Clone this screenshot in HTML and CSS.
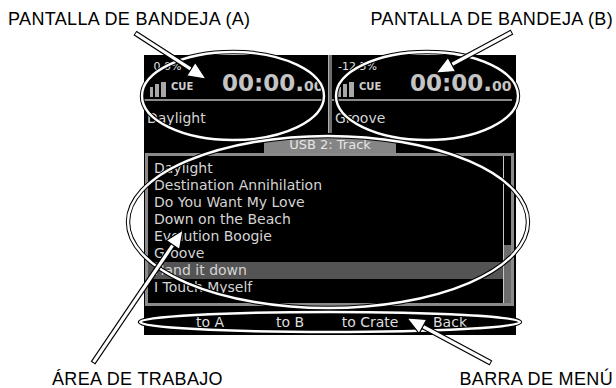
FILE: index.html
```html
<!DOCTYPE html>
<html lang="es">
<head>
<meta charset="utf-8">
<title>Pantalla</title>
<link rel="stylesheet" href="styles.css">
</head>
<body>
<div class="page">
  <header class="labels labels-top">
    <span>PANTALLA DE BANDEJA (A)</span>
    <span>PANTALLA DE BANDEJA (B)</span>
  </header>

  <main class="screen">
    <section class="decks">
      <div class="deck">
        <div class="pitch">&nbsp;0.0%</div>
        <div class="timerow">
          <svg class="bars" viewBox="0 0 16 15"><rect x="0" y="5" width="3" height="10"/><rect x="5" y="2" width="4" height="13"/><rect x="11" y="0" width="5" height="15"/></svg>
          <span class="cue">CUE</span>
          <span class="time">00:00.<small>00</small></span>
        </div>
        <div class="sep"></div>
        <div class="title">Daylight</div>
      </div>
      <div class="divider"></div>
      <div class="deck">
        <div class="pitch">-12.5%</div>
        <div class="timerow">
          <svg class="bars" viewBox="0 0 16 15"><rect x="0" y="5" width="3" height="10"/><rect x="5" y="2" width="4" height="13"/><rect x="11" y="0" width="5" height="15"/></svg>
          <span class="cue">CUE</span>
          <span class="time">00:00.<small>00</small></span>
        </div>
        <div class="sep"></div>
        <div class="title">Groove</div>
      </div>
    </section>

    <div class="tab">USB 2: Track</div>

    <section class="list">
      <ul class="tracks">
        <li>Daylight</li>
        <li>Destination Annihilation</li>
        <li>Do You Want My Love</li>
        <li>Down on the Beach</li>
        <li>Evolution Boogie</li>
        <li>Groove</li>
        <li class="sel">Hand it down</li>
        <li>I Touch Myself</li>
      </ul>
      <div class="scrollbar"><div class="thumb"></div></div>
    </section>

    <nav class="menu">
      <span>to A</span>
      <span>to B</span>
      <span>to Crate</span>
      <span>Back</span>
    </nav>
  </main>

  <footer class="labels labels-bottom">
    <span>ÁREA DE TRABAJO</span>
    <span>BARRA DE MENÚ</span>
  </footer>

  <svg class="overlay" viewBox="0 0 616 388" width="616" height="388">
    <defs>
      <marker id="head" markerUnits="userSpaceOnUse" viewBox="0 0 20 18" markerWidth="20" markerHeight="18" refX="1" refY="9" orient="auto">
        <path d="M1,1 L19,9 L1,17 Z" fill="#fff" stroke="#000" stroke-width="1.2"/>
      </marker>
    </defs>
    <g fill="none" stroke="#000" stroke-width="4.4">
      <ellipse cx="233" cy="96" rx="91" ry="44"/>
      <ellipse cx="427" cy="96" rx="91" ry="44"/>
      <ellipse cx="328" cy="222" rx="200" ry="86"/>
      <ellipse cx="330" cy="322" rx="190" ry="10"/>
    </g>
    <g fill="none" stroke="#fff" stroke-width="2.4">
      <ellipse cx="233" cy="96" rx="91" ry="44"/>
      <ellipse cx="427" cy="96" rx="91" ry="44"/>
      <ellipse cx="328" cy="222" rx="200" ry="86"/>
      <ellipse cx="330" cy="322" rx="190" ry="10"/>
    </g>
    <g stroke="#000" stroke-width="5.6">
      <line x1="135" y1="33" x2="190.9" y2="69.2"/>
      <line x1="512" y1="32" x2="451.8" y2="64.5"/>
      <line x1="93" y1="363" x2="172.9" y2="244.9"/>
      <line x1="491" y1="363" x2="422.9" y2="326.5"/>
    </g>
    <g stroke="#fff" stroke-width="3.2">
      <line x1="135.8" y1="33.5" x2="190.9" y2="69.2" marker-end="url(#head)"/>
      <line x1="511.1" y1="32.5" x2="451.8" y2="64.5" marker-end="url(#head)"/>
      <line x1="93.6" y1="362.2" x2="172.9" y2="244.9" marker-end="url(#head)"/>
      <line x1="490.1" y1="362.5" x2="422.9" y2="326.5" marker-end="url(#head)"/>
    </g>
  </svg>
</div>
</body>
</html>
```

FILE: styles.css
```css
* { box-sizing: border-box; }

body {
  margin: 0;
  background: #fff;
}

.page {
  position: relative;
  width: 616px;
  height: 388px;
  overflow: hidden;
  font-family: "Liberation Sans", Arial, sans-serif;
  color: #000;
}

.labels {
  display: flex;
  justify-content: space-between;
  font-size: 18px;
  line-height: 20px;
  letter-spacing: 0.35px;
  white-space: nowrap;
}

.labels-top {
  height: 55px;
  padding: 9px 3px 0 8px;
}

.labels-bottom {
  margin-top: 38px;
  padding: 0 3px 0 52px;
  line-height: 13px;
}

.screen {
  margin-left: 144px;
  width: 372px;
  height: 280px;
  background: #000;
  font-family: "DejaVu Sans", "Liberation Sans", sans-serif;
  color: #d4d4d4;
  display: flex;
  flex-direction: column;
}

.decks {
  display: flex;
  height: 78px;
  flex-shrink: 0;
}

.deck {
  flex: 1;
  min-width: 0;
  overflow: hidden;
  padding-top: 5px;
}

.pitch {
  height: 13px;
  font-size: 11px;
  line-height: 13px;
  padding-left: 6px;
  color: #e2e2e2;
  white-space: pre;
}

.timerow {
  display: flex;
  align-items: flex-end;
  height: 25px;
  padding-left: 6px;
}

.bars {
  width: 16px;
  height: 15px;
  flex-shrink: 0;
  margin: 0 5px 1px 0;
  fill: #a8a8a8;
}

.cue {
  width: 51px;
  flex-shrink: 0;
  font-size: 10px;
  font-weight: bold;
  line-height: 10px;
  margin-bottom: 6px;
  color: #cdcdcd;
}

.time {
  flex-shrink: 0;
  font-size: 23px;
  font-weight: bold;
  line-height: 23px;
  color: #c4c4c4;
  white-space: nowrap;
}

.time small {
  font-size: 14px;
}

.sep {
  height: 2px;
  margin: 1px 4px 0 0;
  background: #8a8a8a;
}

.title {
  margin-top: 9px;
  padding-left: 3px;
  font-size: 14px;
  line-height: 17px;
  white-space: nowrap;
}

.divider {
  width: 4px;
  flex-shrink: 0;
  background: #6e6e6e;
  border-left: 1px solid #b0b0b0;
}

.tab {
  align-self: center;
  width: 132px;
  height: 16px;
  margin-top: 4px;
  flex-shrink: 0;
  background: #858585;
  color: #e6e6e6;
  font-size: 13px;
  line-height: 16px;
  text-align: center;
  white-space: nowrap;
}

.list {
  display: flex;
  height: 153px;
  flex-shrink: 0;
  margin: 0 2px 0 1px;
  border: 3px solid #8a8a8a;
}

.tracks {
  flex: 1;
  list-style: none;
  margin: 0;
  padding: 4px 0 0 0;
}

.tracks li {
  height: 17px;
  line-height: 17px;
  padding-left: 6px;
  font-size: 14px;
  white-space: nowrap;
}

.tracks li.sel {
  background: #545454;
}

.scrollbar {
  width: 8px;
  border-left: 1px solid #c8c8c8;
  display: flex;
  flex-direction: column;
  justify-content: flex-end;
}

.thumb {
  height: 58px;
  background: #6c6c6c;
}

.menu {
  display: grid;
  grid-template-columns: repeat(4, 80px);
  justify-content: center;
  margin-top: 8px;
  font-size: 14px;
  line-height: 17px;
  text-align: center;
  color: #dedede;
  white-space: nowrap;
}

.overlay {
  position: absolute;
  top: 0;
  left: 0;
  pointer-events: none;
}
```
